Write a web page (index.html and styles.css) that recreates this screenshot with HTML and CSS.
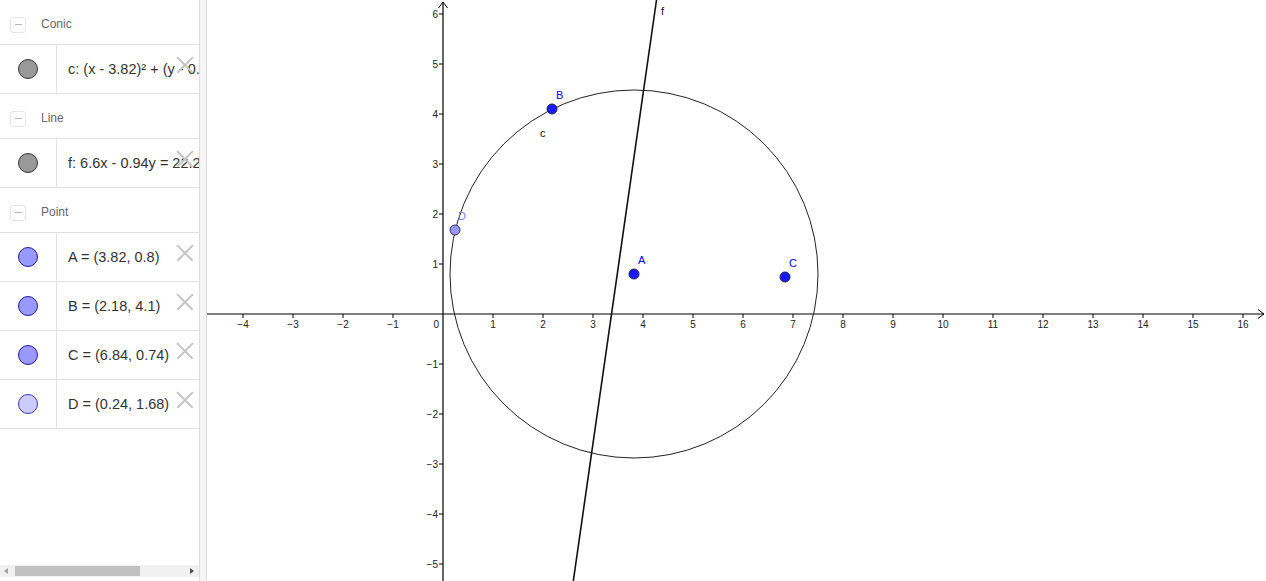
FILE: index.html
```html
<!DOCTYPE html>
<html>
<head>
<meta charset="utf-8">
<link rel="stylesheet" href="styles.css">
</head>
<body>
<div class="app">
  <div class="algebra">
    <div class="list">
      <div class="header"><span class="toggle"><span class="dash"></span></span><span class="htext">Conic</span></div>
      <div class="item">
        <div class="marble"><span class="dot conic"></span></div>
        <div class="text">c: (x - 3.82)² + (y - 0.8)² = 13.54</div>
        <span class="close"></span>
      </div>
      <div class="header"><span class="toggle"><span class="dash"></span></span><span class="htext">Line</span></div>
      <div class="item">
        <div class="marble"><span class="dot conic"></span></div>
        <div class="text">f: 6.6x - 0.94y = 22.23</div>
        <span class="close"></span>
      </div>
      <div class="header"><span class="toggle"><span class="dash"></span></span><span class="htext">Point</span></div>
      <div class="item">
        <div class="marble"><span class="dot pt"></span></div>
        <div class="text">A = (3.82, 0.8)</div>
        <span class="close"></span>
      </div>
      <div class="item">
        <div class="marble"><span class="dot pt"></span></div>
        <div class="text">B = (2.18, 4.1)</div>
        <span class="close"></span>
      </div>
      <div class="item">
        <div class="marble"><span class="dot pt"></span></div>
        <div class="text">C = (6.84, 0.74)</div>
        <span class="close"></span>
      </div>
      <div class="item">
        <div class="marble"><span class="dot ptd"></span></div>
        <div class="text">D = (0.24, 1.68)</div>
        <span class="close"></span>
      </div>
    </div>
    <div class="hscroll">
      <span class="arrow left"></span>
      <span class="thumb"></span>
      <span class="arrow right"></span>
    </div>
  </div>
  <div class="splitter"></div>
  <div class="graphics">
    <svg class="canvas" width="1059" height="581" viewBox="207 0 1059 581" xmlns="http://www.w3.org/2000/svg">
      <defs>
        <pattern id="hatch" width="3" height="3" patternUnits="userSpaceOnUse" patternTransform="rotate(45)">
          <rect width="3" height="3" fill="#8f8ff5"/>
          <line x1="0" y1="0" x2="0" y2="3" stroke="#b8b8fa" stroke-width="1"/>
        </pattern>
      </defs>
      <g id="axes" stroke="#000" fill="none">
        <line x1="207" y1="314" x2="1264" y2="314" stroke-width="1.2"/>
        <polyline points="1258,309.5 1264,314 1258,318.5" stroke-width="1"/>
        <line x1="443" y1="581" x2="443" y2="2" stroke-width="1.2"/>
        <polyline points="438.5,8 443,2 447.5,8" stroke-width="1"/>
      </g>
      <g id="ticks" stroke="#000" stroke-width="1"></g>
      <g id="labels" font-family="'Liberation Sans', Arial, sans-serif" font-size="10" fill="#222"></g>
      <circle cx="634" cy="274" r="184" fill="none" stroke="#222" stroke-width="1"/>
      <line x1="656.5" y1="0" x2="573.3" y2="581" stroke="#111" stroke-width="1.6"/>
      <g font-family="'Liberation Sans', Arial, sans-serif" font-size="11">
        <text x="661" y="15" fill="#111">f</text>
        <text x="540" y="137" fill="#111">c</text>
        <text x="556" y="99" fill="#0000ff">B</text>
        <text x="638" y="264" fill="#0000ff">A</text>
        <text x="789" y="267" fill="#0000ff">C</text>
        <text x="458" y="220" fill="#7f7fff">D</text>
      </g>
      <g stroke="#202060" stroke-width="1">
        <circle cx="552" cy="109" r="5" fill="#1a1aff"/>
        <circle cx="634" cy="274" r="5" fill="#1a1aff"/>
        <circle cx="785" cy="277" r="5" fill="#1a1aff"/>
        <circle cx="455" cy="230" r="5" fill="url(#hatch)" stroke="#303070"/>
      </g>
    </svg>
  </div>
</div>
<script src="app.js"></script>
</body>
</html>
```

FILE: app.js
```js
(function () {
  var ns = "http://www.w3.org/2000/svg";
  var ticks = document.getElementById("ticks");
  var labels = document.getElementById("labels");
  var ox = 443, oy = 314, u = 50;
  function mk(tag, attrs, txt) {
    var e = document.createElementNS(ns, tag);
    for (var k in attrs) e.setAttribute(k, attrs[k]);
    if (txt !== undefined) e.textContent = txt;
    return e;
  }
  function lab(n) { return n < 0 ? "\u2212" + Math.abs(n) : String(n); }
  for (var i = -4; i <= 16; i++) {
    if (i === 0) continue;
    var x = ox + i * u;
    ticks.appendChild(mk("line", { x1: x, y1: oy, x2: x, y2: oy + 4 }));
    labels.appendChild(mk("text", { x: x, y: 328, "text-anchor": "middle" }, lab(i)));
  }
  labels.appendChild(mk("text", { x: 439, y: 328, "text-anchor": "end" }, "0"));
  for (var j = -5; j <= 6; j++) {
    if (j === 0) continue;
    var y = oy - j * u;
    ticks.appendChild(mk("line", { x1: ox - 4, y1: y, x2: ox, y2: y }));
    labels.appendChild(mk("text", { x: 438, y: y + 4, "text-anchor": "end" }, lab(j)));
  }
})();
```

FILE: styles.css
```css
html, body {
  margin: 0;
  padding: 0;
  background: #fff;
  width: 1266px;
  height: 581px;
  overflow: hidden;
  font-family: "Liberation Sans", Arial, sans-serif;
}
.app {
  display: flex;
  width: 1266px;
  height: 581px;
}
.algebra {
  width: 199px;
  border-right: 1px solid #dcdcdc;
  display: flex;
  flex-direction: column;
  position: relative;
  overflow: hidden;
}
.list {
  flex: 1;
}
.header {
  height: 44px;
  box-sizing: border-box;
  padding-top: 3px;
  border-bottom: 1px solid #e2e2e2;
  display: flex;
  align-items: center;
  height: 45px;
}
.toggle {
  width: 14px;
  height: 14px;
  margin-left: 10px;
  margin-top: 2px;
  border: 1px solid #e4e4e4;
  border-radius: 3px;
  display: flex;
  align-items: center;
  justify-content: center;
}
.dash {
  width: 7px;
  height: 1px;
  background: #b8b8b8;
}
.htext {
  margin-left: 15px;
  font-size: 12px;
  color: #666;
}
.item {
  height: 48px;
  border-bottom: 1px solid #e2e2e2;
  display: flex;
  position: relative;
}
.marble {
  width: 56px;
  border-right: 1px solid #e2e2e2;
  display: flex;
  align-items: center;
  justify-content: center;
}
.dot {
  width: 18px;
  height: 18px;
  border-radius: 50%;
  box-sizing: content-box;
}
.dot.conic {
  background: #999;
  border: 1px solid #333;
}
.dot.pt {
  background: #9999ff;
  border: 1px solid #1a1aa0;
}
.dot.ptd {
  background: #ccccff;
  border: 1px solid #3a3ab0;
}
.text {
  flex: 1;
  padding-left: 11px;
  padding-bottom: 1px;
  display: flex;
  align-items: center;
  white-space: nowrap;
  overflow: hidden;
  font-size: 14.5px;
  color: #333;
}
.close {
  position: absolute;
  left: 177px;
  top: 12px;
  width: 16px;
  height: 16px;
}
.close::before, .close::after {
  content: "";
  position: absolute;
  left: -3px;
  top: 7px;
  width: 22px;
  height: 1.5px;
  background: #c4c4c4;
}
.close::before { transform: rotate(45deg); }
.close::after { transform: rotate(-45deg); }
.hscroll {
  height: 12px;
  margin-bottom: 4px;
  background: #f1f1f1;
  display: flex;
  align-items: center;
  position: relative;
}
.thumb {
  margin-left: 15px;
  width: 125px;
  height: 10px;
  background: #c1c1c1;
}
.arrow {
  position: absolute;
  top: 3px;
  width: 0;
  height: 0;
  border-top: 3px solid transparent;
  border-bottom: 3px solid transparent;
}
.arrow.left {
  left: 4px;
  border-right: 4px solid #a3a3a3;
}
.arrow.right {
  left: 190px;
  border-left: 4px solid #505050;
}
.splitter {
  width: 6px;
  background: #f6f6f6;
  border-right: 1px solid #dcdcdc;
}
.graphics {
  flex: 1;
  overflow: hidden;
}
.canvas {
  display: block;
}
```
